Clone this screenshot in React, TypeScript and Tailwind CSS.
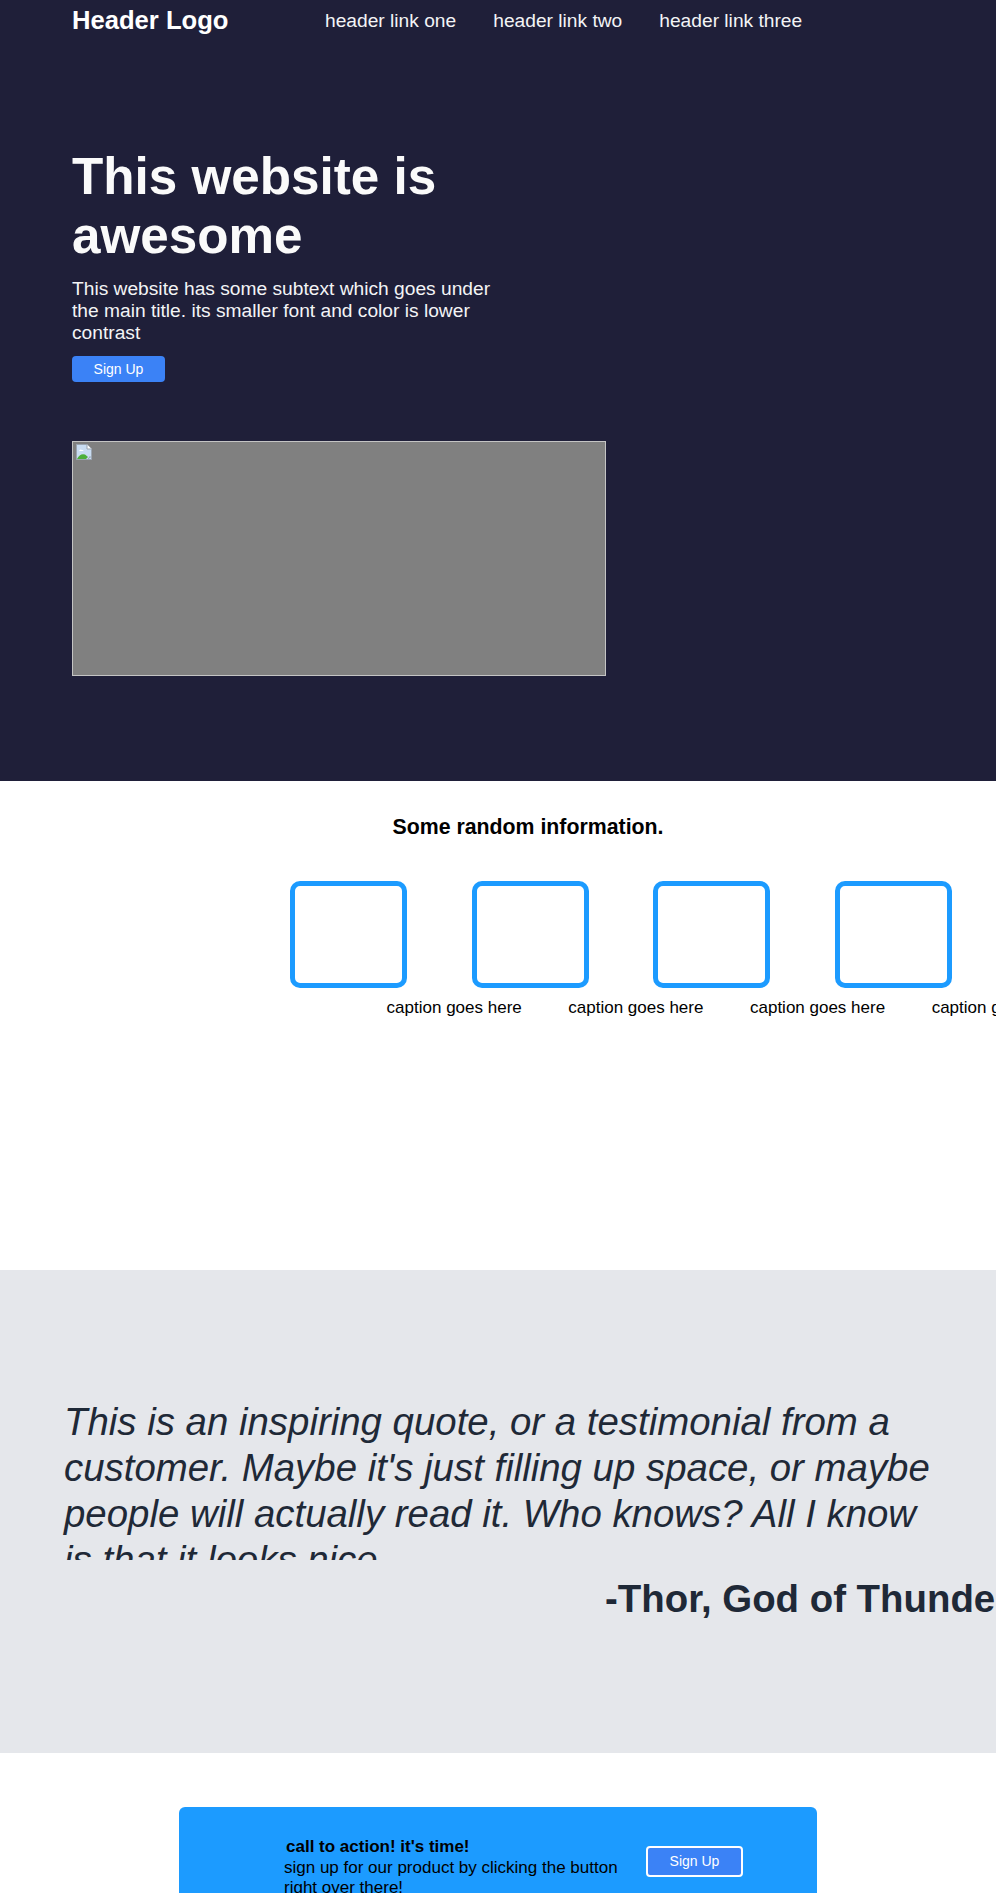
import React from 'react';

const BrokenImageIcon = () => (
  <svg width="16" height="16" viewBox="0 0 16 16" className="absolute left-[3px] top-[2px]">
    <path d="M0.5 0.5 H11 L15.5 5 V15.5 H0.5 Z" fill="#c9dcf2" stroke="#9aa4b0" />
    <path d="M11 0.5 V5 H15.5" fill="#ffffff" stroke="#9aa4b0" />
    <path d="M3 7 Q4 4.5 6 6 Q7.5 5.5 7.5 7 Z" fill="#ffffff" />
    <path d="M1 15 Q4 9 9 10.5 L12 13 L10 15 Z" fill="#4caf3a" />
    <path d="M12 15.5 L14 12.5 L15.5 14" fill="none" stroke="#9aa4b0" />
  </svg>
);

const captions = ['caption goes here', 'caption goes here', 'caption goes here', 'caption goes here'];

export default function App() {
  return (
    <div className="min-h-screen overflow-hidden bg-white font-['Liberation_Sans',Arial,sans-serif]">
      {/* hero */}
      <section className="bg-[#1f1f39] text-white">
        <header className="flex items-center h-[42px] pl-[72px]">
          <div className="w-[253px] text-[1.6rem] font-bold leading-[1.15]">Header Logo</div>
          <nav className="flex gap-[37px] text-[1.2rem] leading-[1.15] text-[#f3f4f6]">
            <a href="#">header link one</a>
            <a href="#">header link two</a>
            <a href="#">header link three</a>
          </nav>
        </header>

        <div className="pl-[72px] pt-[106px] pb-[105px]">
          <div className="w-[440px]">
            <h1 className="text-[3.2rem] font-bold leading-[1.15] text-[#fafafa]">This website is awesome</h1>
            <p className="mt-3 text-[1.2rem] leading-[1.15] text-[#f3f4f6]">
              This website has some subtext which goes under the main title. its smaller font and color is lower
              contrast
            </p>
            <button className="mt-3 w-[93px] h-[26px] rounded bg-[#3b82f6] text-sm text-white">Sign Up</button>
          </div>

          <div className="relative mt-[59px] w-[534px] h-[235px] border border-[#c4c4c4] bg-[#808080]">
            <BrokenImageIcon />
          </div>
        </div>
      </section>

      {/* info */}
      <section className="h-[489px] pt-[34px]">
        <h3 className="pl-[60px] text-center text-[21.3px] font-bold leading-[1.15] text-black">
          Some random information.
        </h3>
        <div className="mt-[41.5px] ml-[290px] flex gap-[64.7px]">
          {captions.map((c, i) => (
            <div key={i} className="w-[117px] shrink-0">
              <div className="h-[107px] rounded-[10px] border-[5px] border-[#1c9bff]"></div>
              <p className="mt-[10px] ml-[96.6px] whitespace-nowrap text-[17px] leading-[1.15] text-black">{c}</p>
            </div>
          ))}
        </div>
      </section>

      {/* quote */}
      <section className="h-[483px] bg-[#e5e7eb] pt-[129px] text-[#1f2937]">
        <p className="h-[161px] overflow-hidden px-16 text-[2.4rem] italic leading-[1.2]">
          This is an inspiring quote, or a testimonial from a customer. Maybe it's just filling up space, or maybe
          people will actually read it. Who knows? All I know is that it looks nice.
        </p>
        <p className="mt-[17.5px] pl-[605px] whitespace-nowrap text-[2.4rem] font-bold leading-[1.15]">
          -Thor, God of Thunder
        </p>
      </section>

      {/* call to action */}
      <section className="pt-[54px] pb-24">
        <div className="mx-auto flex w-[638px] items-start rounded-md bg-[#1c9bff] pt-[30px] pb-8 pl-[105px]">
          <div className="w-[350px] text-[17px] leading-[1.15] text-black">
            <p className="ml-0.5 font-bold">call to action! it's time!</p>
            <p className="mt-[1.5px]">sign up for our product by clicking the button right over there!</p>
          </div>
          <button className="ml-3 mt-[9px] w-[97px] h-[31px] rounded border-2 border-white bg-[#3b82f6] text-sm text-white">
            Sign Up
          </button>
        </div>
      </section>
    </div>
  );
}
